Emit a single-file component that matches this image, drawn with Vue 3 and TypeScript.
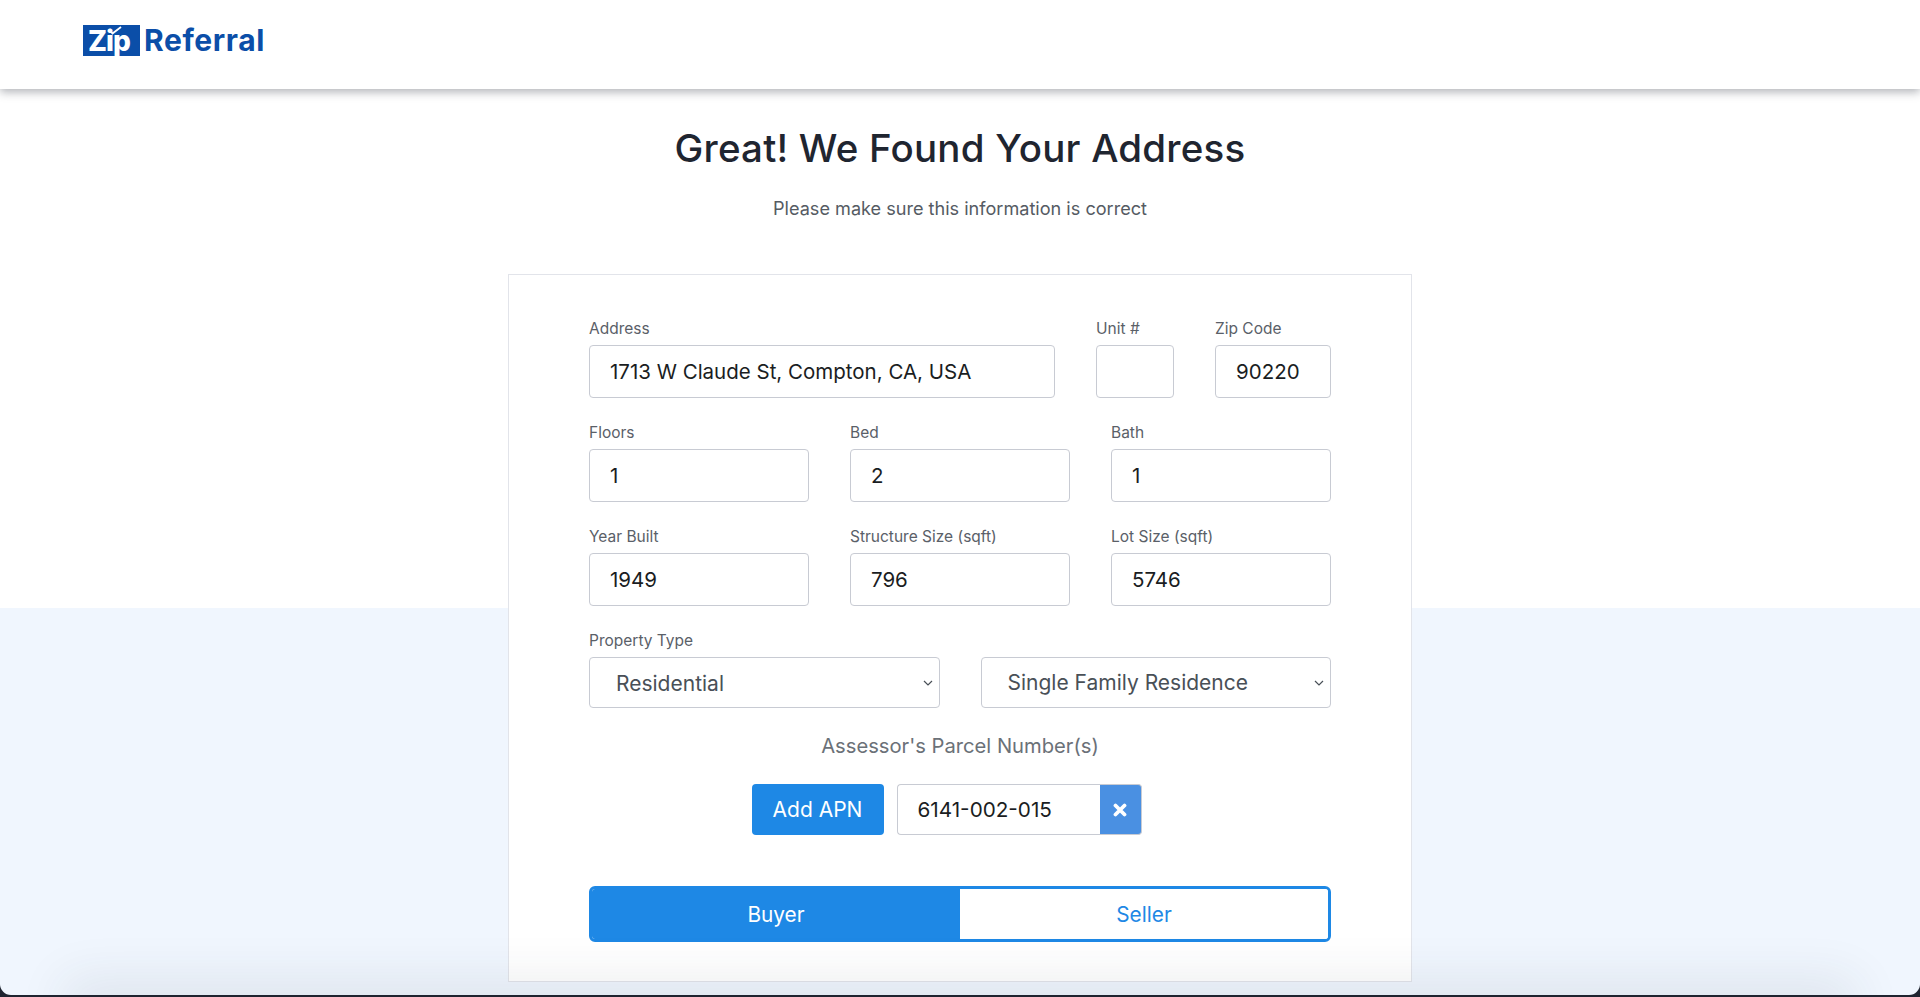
<script setup lang="ts">
import { ref } from 'vue'

const address = ref('1713 W Claude St, Compton, CA, USA')
const unit = ref('')
const zip = ref('90220')
const apn = ref('6141-002-015')
const side = ref('buyer')

const detailRows = [
	[
		{ label: 'Floors', value: '1' },
		{ label: 'Bed', value: '2' },
		{ label: 'Bath', value: '1' },
	],
	[
		{ label: 'Year Built', value: '1949' },
		{ label: 'Structure Size (sqft)', value: '796' },
		{ label: 'Lot Size (sqft)', value: '5746' },
	],
]
</script>

<template>
  <div class="page">
    <header class="header">
      <div class="logo">
        <span class="logoBox">
          Zip
          <svg class="logoCheck" viewBox="0 0 14 9" width="14" height="9">
            <path d="M1 3.5 L4.5 7.5 L13 1" fill="none" stroke="#fff" stroke-width="1.8" />
          </svg>
        </span>
        <span class="logoText">Referral</span>
      </div>
    </header>

    <h1 class="title">Great! We Found Your Address</h1>
    <p class="subtitle">Please make sure this information is correct</p>

    <form class="card" @submit.prevent>
      <div class="row addressRow">
        <label class="field">
          <span class="label">Address</span>
          <input v-model="address" class="input">
        </label>
        <label class="field">
          <span class="label">Unit #</span>
          <input v-model="unit" class="input">
        </label>
        <label class="field">
          <span class="label">Zip Code</span>
          <input v-model="zip" class="input">
        </label>
      </div>

      <div v-for="(row, index) in detailRows" :key="index" class="row thirds">
        <label v-for="item in row" :key="item.label" class="field">
          <span class="label">{{ item.label }}</span>
          <input class="input" :value="item.value">
        </label>
      </div>

      <span class="label">Property Type</span>
      <div class="halves">
        <select class="select lowered">
          <option>Residential</option>
        </select>
        <select class="select">
          <option>Single Family Residence</option>
        </select>
      </div>

      <div class="apnTitle">Assessor's Parcel Number(s)</div>

      <div class="apnRow">
        <button class="addButton" type="button">Add APN</button>
        <div class="apnGroup">
          <input v-model="apn" class="apnInput">
          <button class="removeButton" type="button" aria-label="Remove">
            <svg viewBox="0 0 14 14" width="14" height="14">
              <path d="M2.5 2.5 L11.5 11.5 M11.5 2.5 L2.5 11.5" stroke="#fff" stroke-width="3.8" stroke-linecap="round" />
            </svg>
          </button>
        </div>
      </div>

      <div class="toggle">
        <button
          type="button"
          :class="['toggleItem', { active: side === 'buyer' }]"
          @click="side = 'buyer'"
        >
          Buyer
        </button>
        <button
          type="button"
          :class="['toggleItem', { active: side === 'seller' }]"
          @click="side = 'seller'"
        >
          Seller
        </button>
      </div>
    </form>

    <div class="bottomShade" />
  </div>
</template>

<style>
body {
  background: #1f2430;
}
</style>

<style scoped>
.page {
  position: relative;
  height: 995px;
  overflow: hidden;
  border-radius: 0 0 11px 11px;
  background: linear-gradient(#fff 0 608px, #f0f6fe 608px);
  font-family: "Inter", "Noto Sans", sans-serif;
  color: #1f2530;
}
.header {
  height: 89px;
  box-sizing: border-box;
  padding: 25px 0 0 83px;
  background: #fff;
  box-shadow: 0 3px 9px rgba(30, 35, 50, 0.35);
}
.logo {
  display: flex;
  gap: 4px;
  color: #0b4ea8;
}
.logoBox {
  position: relative;
  width: 57px;
  height: 31px;
  box-sizing: border-box;
  padding-left: 5px;
  background: #0b4ea8;
  color: #fff;
  font-size: 28px;
  font-weight: 800;
  line-height: 32px;
  letter-spacing: -1px;
}
.logoCheck {
  position: absolute;
  left: 25px;
  top: 1px;
}
.logoText {
  font-size: 30px;
  font-weight: 700;
  line-height: 31px;
  letter-spacing: 0.6px;
}
.title {
  margin: 36px 0 25px;
  font-size: 38.5px;
  font-weight: 500;
  line-height: 46px;
  letter-spacing: 0.2px;
  text-align: center;
}
.subtitle {
  margin: 0 0 54px;
  color: #555b63;
  font-size: 18.1px;
  line-height: 24px;
  text-align: center;
}
.card {
  width: 904px;
  box-sizing: border-box;
  margin: 0 auto;
  padding: 43px 80px 39px;
  border: 1px solid #e2e4ea;
  background: #fff;
}
.row {
  margin-bottom: 24px;
}
.addressRow {
  display: grid;
  grid-template-columns: 466px 78px 1fr;
  column-gap: 41px;
}
.thirds {
  display: grid;
  grid-template-columns: repeat(3, 1fr);
  column-gap: 41px;
}
.halves {
  display: grid;
  grid-template-columns: repeat(2, 1fr);
  column-gap: 41px;
}
.field {
  display: block;
}
.label {
  display: block;
  margin-bottom: 6px;
  color: #5a6068;
  font-size: 15.5px;
  line-height: 21px;
}
.input,
.apnInput {
  width: 100%;
  box-sizing: border-box;
  border: 1px solid #c8cbd3;
  background: #fff;
  color: #1a1d22;
  font-family: inherit;
  font-size: 20.5px;
  outline: none;
}
.input {
  display: block;
  height: 53px;
  padding: 0 20px;
  border-radius: 4px;
}
.select {
  width: 100%;
  height: 51px;
  box-sizing: border-box;
  padding: 0 26px;
  border: 1px solid #c8cbd3;
  border-radius: 4px;
  appearance: none;
  background: #fff url("data:image/svg+xml,%3Csvg xmlns='http://www.w3.org/2000/svg' width='10' height='6'%3E%3Cpath d='M1 1l4 4 4-4' fill='none' stroke='%23495057' stroke-width='1.2'/%3E%3C/svg%3E") no-repeat right 6px center;
  color: #495057;
  font-family: inherit;
  font-size: 21px;
}
.lowered {
  padding-top: 2px;
}
.apnTitle {
  margin: 26px 0;
  color: #6b7178;
  font-size: 20.2px;
  line-height: 24px;
  text-align: center;
}
.apnRow {
  display: flex;
  justify-content: center;
  gap: 13px;
  margin-bottom: 51px;
  padding-right: 27px;
}
.addButton {
  width: 132px;
  height: 51px;
  border: none;
  border-radius: 4px;
  background: #1e88e5;
  color: #fff;
  font-family: inherit;
  font-size: 21px;
}
.apnGroup {
  display: flex;
  width: 245px;
  height: 51px;
}
.apnInput {
  flex: 1;
  min-width: 0;
  padding: 0 20px;
  border-right: none;
  border-radius: 4px 0 0 4px;
  font-size: 20.7px;
}
.removeButton {
  display: flex;
  align-items: center;
  justify-content: center;
  width: 42px;
  padding: 0;
  border: 1px solid #c8cbd3;
  border-left: none;
  border-radius: 0 4px 4px 0;
  background: #4a90e2;
}
.toggle {
  display: grid;
  grid-template-columns: 368px 1fr;
  height: 56px;
  box-sizing: border-box;
  overflow: hidden;
  border: 3px solid #1e88e5;
  border-radius: 6px;
}
.toggleItem {
  border: none;
  background: #fff;
  color: #1e88e5;
  font-family: inherit;
  font-size: 20.8px;
}
.toggleItem.active {
  background: #1e88e5;
  color: #fff;
}
.bottomShade {
  position: absolute;
  left: 80px;
  right: 80px;
  bottom: -20px;
  height: 20px;
  box-shadow: 0 0 50px 16px rgba(40, 50, 70, 0.09);
  pointer-events: none;
}
</style>
